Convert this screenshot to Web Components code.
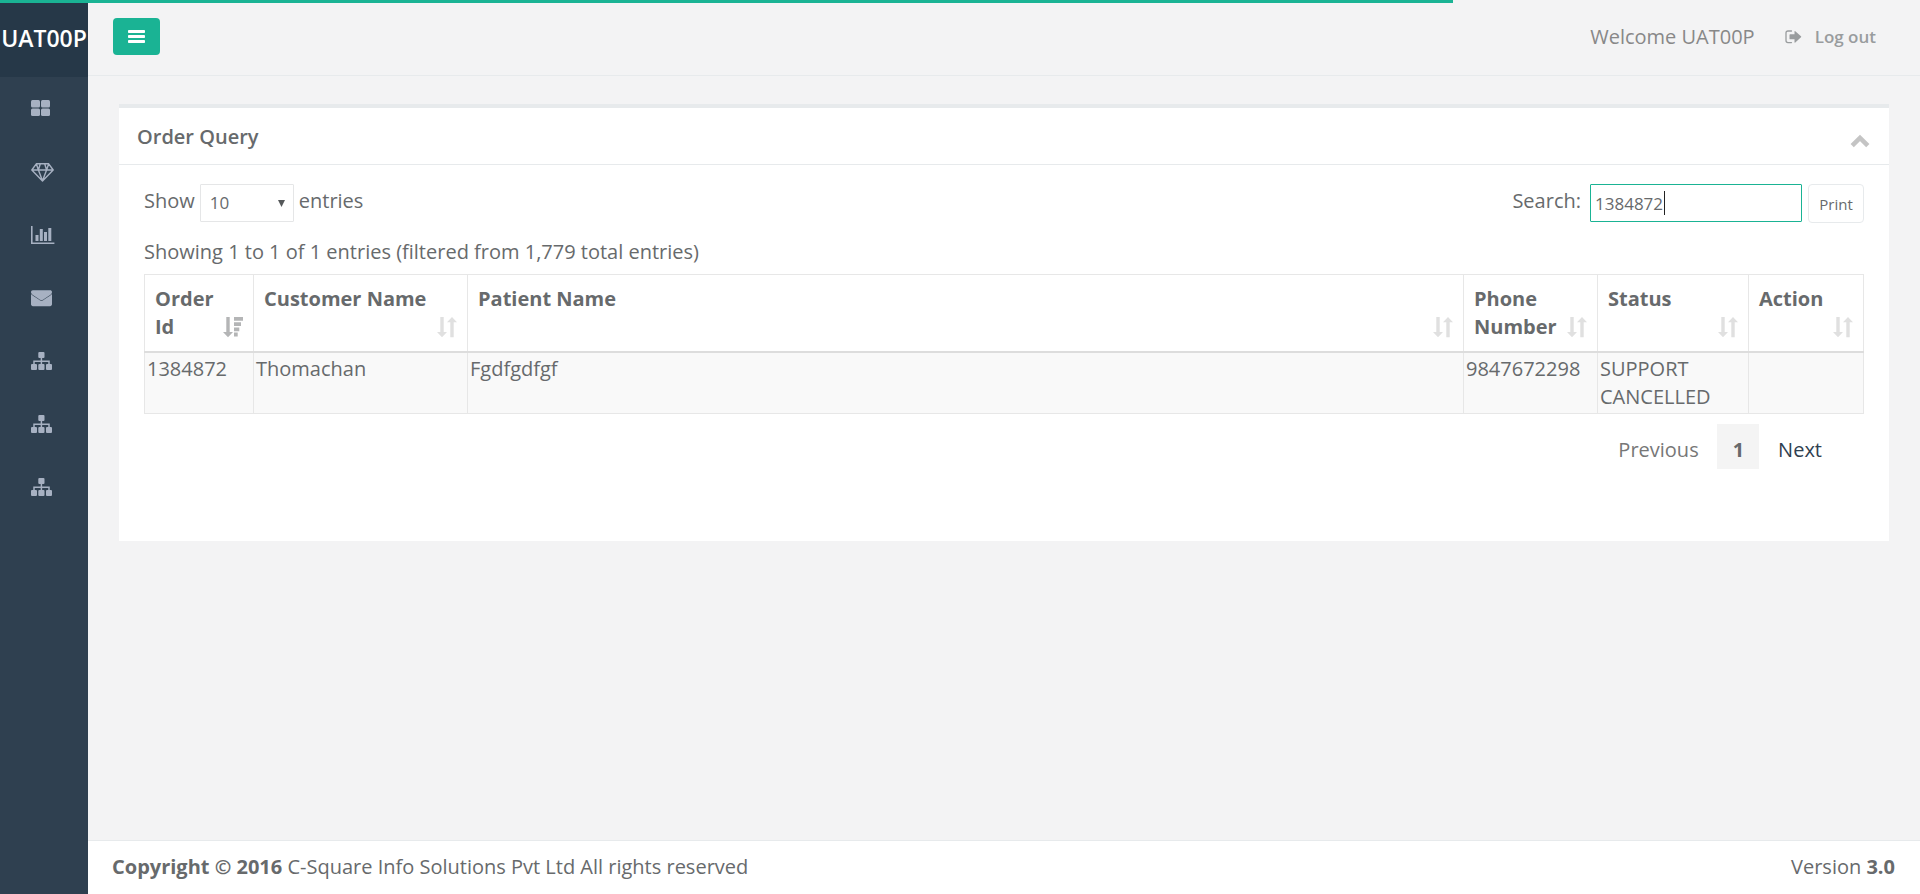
<!DOCTYPE html>
<html lang="en">
<head>
<meta charset="utf-8">
<meta name="viewport" content="width=device-width, initial-scale=1">
<title>Order Query</title>
<style>
body { margin: 0; background: #2f4050; color: #676a6c; font: 20px/28px "Open Sans", "Noto Sans", sans-serif; }
</style>
</head>
<body>
<app-shell>
  <side-nav slot="nav" brand="UAT00P"></side-nav>
  <top-bar slot="top" user="UAT00P"></top-bar>
  <content-panel heading="Order Query">
    <table-toolbar></table-toolbar>
    <order-table></order-table>
    <page-links></page-links>
  </content-panel>
  <page-footer slot="footer">
    <span><strong>Copyright © 2016</strong> C-Square Info Solutions Pvt Ltd All rights reserved</span>
    <span slot="version">Version <strong>3.0</strong></span>
  </page-footer>
</app-shell>
<script>
const define = (name, html, setup) => {
  const tpl = document.createElement('template');
  tpl.innerHTML = html;
  customElements.define(name, class extends HTMLElement {
    connectedCallback() {
      if (this.shadowRoot) return;
      this.attachShadow({ mode: 'open' }).append(tpl.content.cloneNode(true));
      if (setup) setup(this, this.shadowRoot);
    }
  });
};

/* name: [width, height, markup] */
const ICONS = {
  grid: [24, 20, '<rect y="1" width="9" height="7.5" rx="1.5"/><rect x="10" y="1" width="9" height="7.5" rx="1.5"/><rect y="9.5" width="9" height="7.5" rx="1.5"/><rect x="10" y="9.5" width="9" height="7.5" rx="1.5"/>'],
  diamond: [24, 20, '<path d="M5.3 1.8h12.4L22.2 8 11.5 19.1 0.8 8zM0.8 8h21.4M5.3 1.8L7.4 8 11.5 18.7 15.6 8 17.7 1.8M9.3 1.8L7.4 8M13.7 1.8L15.6 8" fill="none" stroke="currentColor" stroke-width="1.4" stroke-linejoin="round"/>'],
  chart: [24, 20, '<path d="M0 1h1.6v16.4H23.4V19H0zM4.5 10h3v6h-3zM8.8 4h3v12h-3zM13 7h3v9h-3zM17.3 3h3v13h-3z"/>'],
  mail: [24, 20, '<path d="M0 6c.5.5 1.100 1 1.700 1.400C4.200 9.100 6.500 10.600 7.800 11.600c.9.700 1.800 1.300 2.700 1.300s1.800-.6 2.700-1.300c1.300-1 3.600-2.500 6.100-4.200.6-.4 1.200-.9 1.700-1.400v10.300c0 1-.9 1.900-1.900 1.900H1.900C.9 18.200 0 17.300 0 16.300zM1.900 2.200h17.200c1 0 1.900.7 1.900 1.700 0 1.200-.9 2.300-1.900 3-1.900 1.300-4.200 2.800-6 4.100-.8.500-1.800 1.300-2.600 1.300s-1.800-.8-2.600-1.300C6.100 9.700 3.800 8.200 1.900 6.900 1.100 6.300 0 5.200 0 4.200c0-1.100.7-2 1.900-2z"/>'],
  tree: [24, 20, '<rect x="7.300" y="1" width="6.200" height="6" rx="1"/><rect y="13" width="6" height="6" rx="1"/><rect x="7.300" y="13" width="6.200" height="6" rx="1"/><rect x="15" y="13" width="6" height="6" rx="1"/><path d="M10.400 6.500v7M3 13.500v-3.200h15v3.200" fill="none" stroke="currentColor" stroke-width="1.500"/>'],
  bars: [17, 14, '<rect width="17" height="3" rx=".8"/><rect y="5" width="17" height="3" rx=".8"/><rect y="10" width="17" height="3" rx=".8"/>'],
  logout: [17, 14, '<path d="M6.500 1H3Q1 1 1 3v7.500Q1 12.600 3 12.600h3.500" fill="none" stroke="currentColor" stroke-width="1.300" stroke-linecap="round"/><path d="M4.500 4.900Q4.500 4.300 5.100 4.300H9.500V1.600Q9.500.6 10.300 1.200L16 6.300Q16.500 6.800 16 7.300L10.300 12.400Q9.500 13 9.500 12V9.300H5.100Q4.500 9.300 4.500 8.700z"/>'],
  up: [20, 14, '<path d="M2.200 10.600L10 2.900 17.800 10.600" fill="none" stroke="currentColor" stroke-width="4.600"/>'],
  sort: [20, 20, '<path d="M3.300 0h3.400v15H10L5 20.200 0 15h3.300zM13.300 20.200h3.400V5.200H20L15 0 10 5.200h3.300z"/>'],
  sorted: [20, 20, '<path d="M3.300 0h3.400v15H10L5 20.200 0 15h3.300zM11 0h9v3.800h-9zM11 5.200h7v3.800h-7zM11 10.400h5.300v3.800H11zM11 15.600h3.700v3.800H11z"/>']
};
define('ui-icon', '<style>:host{display:inline-flex;flex:none}svg{display:block;overflow:visible}</style>', (el, root) => {
  const [w, h, art] = ICONS[el.getAttribute('name')];
  root.innerHTML += `<svg width="${w}" height="${h}" viewBox="0 0 ${w} ${h}" fill="currentColor" aria-hidden="true">${art}</svg>`;
});

define('app-shell', `<style>
:host { display: grid; grid-template-columns: 88px minmax(0, 1fr); min-height: 100vh; }
.progress { position: absolute; top: 0; left: 0; width: 75.7%; height: 3px; background: #1ab394; }
.page { display: flex; flex-direction: column; background: #f3f3f4; }
main { flex: 1; padding: 28px 31px; }
</style>
<slot name="nav"></slot>
<div class="page"><slot name="top"></slot><main><slot></slot></main><slot name="footer"></slot></div>
<div class="progress"></div>`);

define('side-nav', `<style>
:host { display: block; background: #2f4050; color: #a7b1c2; }
.brand { box-sizing: border-box; display: flex; align-items: center; justify-content: center; height: 77px; padding-bottom: 2px; background: #263848; color: #fff; font-size: 23px; font-weight: 600; }
ul { margin: 0; padding: 0; list-style: none; }
a { display: flex; align-items: center; height: 63px; padding-left: 31px; color: inherit; }
</style>
<div class="brand"></div>
<nav><ul>
<li><a href="#" aria-label="Dashboard"><ui-icon name="grid"></ui-icon></a></li>
<li><a href="#" aria-label="Products"><ui-icon name="diamond"></ui-icon></a></li>
<li><a href="#" aria-label="Reports"><ui-icon name="chart"></ui-icon></a></li>
<li><a href="#" aria-label="Mail"><ui-icon name="mail"></ui-icon></a></li>
<li><a href="#" aria-label="Orders"><ui-icon name="tree"></ui-icon></a></li>
<li><a href="#" aria-label="Customers"><ui-icon name="tree"></ui-icon></a></li>
<li><a href="#" aria-label="Branches"><ui-icon name="tree"></ui-icon></a></li>
</ul></nav>`, (el, root) => { root.querySelector('.brand').textContent = el.getAttribute('brand'); });

define('top-bar', `<style>
:host { box-sizing: border-box; display: flex; align-items: center; justify-content: space-between; height: 76px; padding: 0 44px 2px 25px; border-bottom: 1px solid #e7eaec; }
button { display: flex; align-items: center; justify-content: center; width: 47px; height: 37px; padding: 0; border: 0; border-radius: 4px; background: #1ab394; color: #fff; }
.user { display: flex; align-items: center; gap: 30px; color: #888; }
a { display: flex; align-items: center; gap: 13px; color: #999c9e; font-size: 17px; font-weight: 600; text-decoration: none; }
</style>
<button type="button" aria-label="Toggle menu"><ui-icon name="bars"></ui-icon></button>
<div class="user"><span class="hello"></span><a href="#"><ui-icon name="logout"></ui-icon>Log out</a></div>`,
(el, root) => { root.querySelector('.hello').textContent = 'Welcome ' + el.getAttribute('user'); });

define('content-panel', `<style>
:host { display: block; background: #fff; border-top: 4px solid #e7eaec; }
header { box-sizing: border-box; display: flex; align-items: center; justify-content: space-between; height: 57px; padding: 2px 19px 0 18px; border-bottom: 1px solid #e7eaec; }
h5 { margin: 0; font-size: 20px; font-weight: 600; }
button { display: flex; padding: 10px 0 0; border: 0; background: none; color: #c4c4c4; }
.body { padding: 19px 25px 72px; }
</style>
<header><h5></h5><button type="button" aria-label="Collapse"><ui-icon name="up"></ui-icon></button></header>
<div class="body"><slot></slot></div>`, (el, root) => { root.querySelector('h5').textContent = el.getAttribute('heading'); });

define('table-toolbar', `<style>
:host { display: block; }
.row { display: flex; justify-content: space-between; align-items: flex-start; }
.group { display: flex; align-items: flex-start; gap: 5px; }
label { line-height: 34px; }
select, input { box-sizing: border-box; height: 38px; border: 1px solid #e5e6e7; border-radius: 1px; background: #fff; color: inherit; font: 17px/24px "Open Sans", sans-serif; outline: 0; }
.pick { display: grid; align-items: center; }
.pick > *, .field > * { grid-area: 1 / 1; }
select { width: 94px; padding: 0 9px; appearance: none; }
.pick svg { justify-self: end; margin-right: 9px; pointer-events: none; }
.field { display: grid; align-items: center; margin: 0 1px 0 4px; }
input { width: 212px; padding: 0 4px; border-color: #1ab394; caret-color: transparent; }
.caret { justify-self: start; width: 1px; height: 24px; margin-left: 74px; background: #222; }
button { box-sizing: border-box; width: 56px; height: 39px; padding: 0; border: 1px solid #e7eaec; border-radius: 4px; background: #fff; color: inherit; font: 15px/20px "Open Sans", sans-serif; }
p { margin: 15px 0 8px; }
</style>
<div class="row">
<div class="group"><label for="len">Show</label>
<span class="pick"><select id="len"><option>10</option><option>25</option><option>50</option></select><svg width="7" height="7" viewBox="0 0 7 7" fill="#55585a" aria-hidden="true"><path d="M0 0h7L3.500 7z"/></svg></span>
<label for="len">entries</label></div>
<div class="group"><label for="find">Search:</label>
<span class="field"><input id="find" type="text" value="1384872"><i class="caret"></i></span>
<button type="button">Print</button></div>
</div>
<p>Showing 1 to 1 of 1 entries (filtered from 1,779 total entries)</p>`);

define('order-table', `<style>
:host { display: block; }
table { width: 100%; table-layout: fixed; border-collapse: collapse; }
th, td { border: 1px solid #e7e7e7; text-align: left; vertical-align: top; }
th { height: 56px; padding: 10px; border-bottom: 2px solid #ddd; font-weight: 700; }
th div { display: flex; align-items: flex-end; justify-content: space-between; height: 56px; }
th span { align-self: flex-start; }
th ui-icon { color: #e0e0e0; margin-bottom: 4px; }
th[aria-sort] ui-icon { color: #b4b5b6; }
td { padding: 2px; height: 56px; background: #f9f9f9; }
.id { width: 109px; } .customer { width: 214px; } .phone { width: 134px; } .status { width: 151px; } .action { width: 115px; }
</style>
<table>
<colgroup><col class="id"><col class="customer"><col><col class="phone"><col class="status"><col class="action"></colgroup>
<thead><tr>
<th aria-sort="descending"><div><span>Order Id</span><ui-icon name="sorted"></ui-icon></div></th>
<th><div><span>Customer Name</span><ui-icon name="sort"></ui-icon></div></th>
<th><div><span>Patient Name</span><ui-icon name="sort"></ui-icon></div></th>
<th><div><span>Phone Number</span><ui-icon name="sort"></ui-icon></div></th>
<th><div><span>Status</span><ui-icon name="sort"></ui-icon></div></th>
<th><div><span>Action</span><ui-icon name="sort"></ui-icon></div></th>
</tr></thead>
<tbody><tr><td>1384872</td><td>Thomachan</td><td>Fgdfgdfgf</td><td>9847672298</td><td>SUPPORT CANCELLED</td><td></td></tr></tbody>
</table>`);

define('page-links', `<style>
:host { display: flex; justify-content: flex-end; margin-top: 10px; padding-right: 23px; }
a { padding: 12px 19px 5px; color: #2f4050; text-decoration: none; }
.off { padding-right: 18px; color: #777; }
.on { padding: 12px 15px 5px 16px; background: #f4f4f4; color: #676a6c; font-weight: 700; }
</style>
<a class="off" href="#">Previous</a><a class="on" href="#" aria-current="page">1</a><a href="#">Next</a>`);

define('page-footer', `<style>
:host { display: flex; justify-content: space-between; padding: 12px 25px 13px 24px; border-top: 1px solid #e7eaec; background: #fff; }
</style>
<slot></slot><slot name="version"></slot>`);
</script>
</body>
</html>
